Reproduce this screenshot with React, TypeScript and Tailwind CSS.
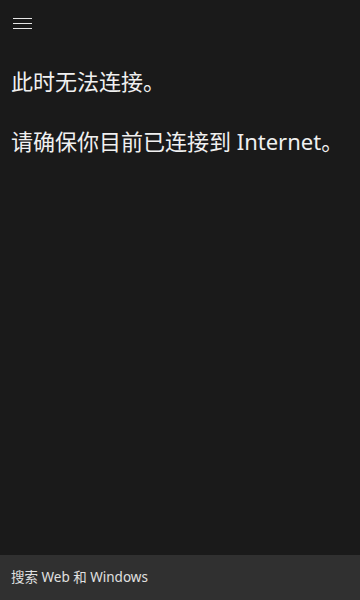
export default function App() {
  return (
    <div
      className="w-[360px] h-[600px] bg-[#1a1a1a] text-white flex flex-col overflow-hidden"
      style={{ fontFamily: '"Noto Sans", "Noto Sans CJK SC", sans-serif' }}
    >
      <div className="h-[46px] pt-[18px] pl-[13px]">
        <div className="w-[19px] flex flex-col gap-[4px]">
          <div className="h-px bg-[#e6e6e6]" />
          <div className="h-px bg-[#e6e6e6]" />
          <div className="h-px bg-[#e6e6e6]" />
        </div>
      </div>
      <div className="flex-1 px-[11px] pt-[20px]">
        <p className="text-[22px] leading-[30px] text-[#f0f0f0]">此时无法连接。</p>
        <p className="mt-[30px] text-[22px] leading-[30px] text-[#f0f0f0]">请确保你目前已连接到 Internet。</p>
      </div>
      <div className="h-[45px] bg-[#303030] flex items-center px-[11px]">
        <span className="text-[13.5px] text-[#e0e0e0]">搜索 Web 和 Windows</span>
      </div>
    </div>
  );
}
